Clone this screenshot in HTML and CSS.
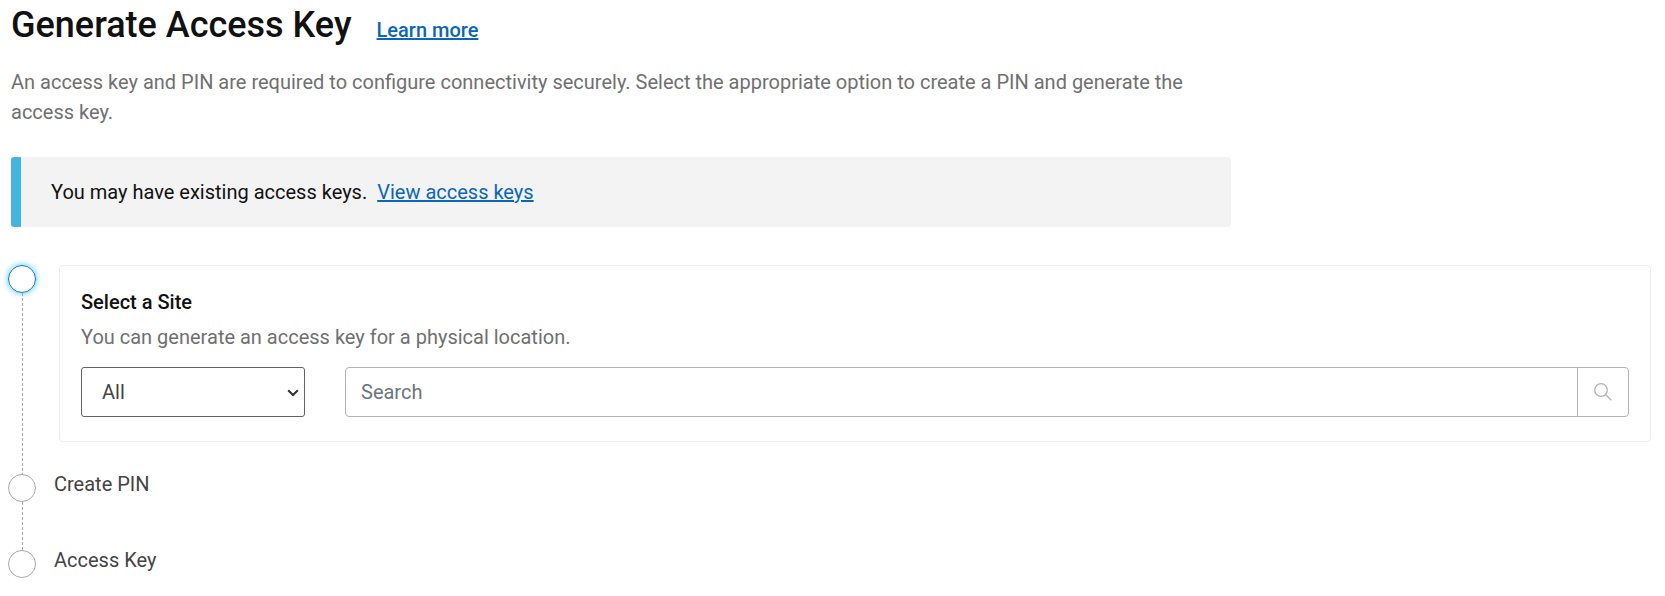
FILE: index.html
```
<!DOCTYPE html>
<html lang="en">

<head>
    <meta charset="UTF-8">
    <meta name="viewport" content="width=device-width, initial-scale=1.0">
    <title>Generate Access Key</title>
    <link rel="stylesheet" href="styles.css">
</head>

<body>
    <main class="page">
        <header class="page-header">
            <h1>Generate Access Key</h1>
            <a class="learn-more" href="#">Learn more</a>
        </header>
        <p class="description">An access key and PIN are required to configure connectivity securely. Select the
            appropriate option to create a PIN and generate the access key.</p>
        <div class="notice">
            <span>You may have existing access keys.</span>
            <a href="#">View access keys</a>
        </div>
        <ol class="steps">
            <li class="step active">
                <div class="marker"></div>
                <section class="card">
                    <h2>Select a Site</h2>
                    <p>You can generate an access key for a physical location.</p>
                    <form class="filters">
                        <div class="select-wrap">
                            <select class="site-filter" aria-label="Site filter">
                                <option>All</option>
                            </select>
                            <svg class="chevron" viewBox="0 0 12 8" aria-hidden="true">
                                <path d="M1.2 1.2 6 6l4.800-4.800" />
                            </svg>
                        </div>
                        <div class="search">
                            <input type="text" placeholder="Search" aria-label="Search sites">
                            <button type="button" aria-label="Search">
                                <svg viewBox="0 0 18 18" aria-hidden="true">
                                    <circle cx="7" cy="7" r="6.300" />
                                    <path d="M11.500 11.500 17.300 17.300" />
                                </svg>
                            </button>
                        </div>
                    </form>
                </section>
            </li>
            <li class="step">
                <div class="marker"></div>
                <span class="step-label">Create PIN</span>
            </li>
            <li class="step">
                <div class="marker"></div>
                <span class="step-label">Access Key</span>
            </li>
        </ol>
    </main>
</body>

</html>
```
FILE: styles.css
```
*,
*::before,
*::after {
    box-sizing: border-box;
}

body {
    font-family: Roboto, Arial, sans-serif;
    font-size: 20px;
    line-height: 30px;
    margin: 0;
    color: #111;
    background-color: #fff;
}

h1,
h2,
p {
    margin: 0;
}

a {
    color: #0b66b8;
}

.page {
    padding: 3px 14px 16px 11px;
}

.page-header {
    display: flex;
    align-items: baseline;
    gap: 25px;
    margin-bottom: 20px;
}

h1 {
    font-size: 36px;
    line-height: 44px;
    font-weight: 500;
}

.learn-more {
    font-weight: 500;
}

.description {
    max-width: 1200px;
    margin-bottom: 30px;
    color: #707070;
}

.notice {
    display: flex;
    gap: 10px;
    max-width: 1220px;
    margin-bottom: 38px;
    padding: 20px 30px;
    border-left: 10px solid #41b6e0;
    border-radius: 3px;
    background-color: #f3f3f3;
}

.steps {
    list-style: none;
    margin: 0 0 0 -3px;
    padding: 0;
}

.step {
    display: flex;
}

.step:not(:last-child) {
    min-height: 76px;
}

.step.active {
    gap: 23px;
}

.marker {
    display: flex;
    flex-direction: column;
    align-items: center;
    flex: 0 0 28px;
}

.marker::before {
    content: "";
    width: 28px;
    height: 28px;
    border: 1px solid #aaa;
    border-radius: 50%;
}

.active .marker::before {
    border-color: #0d76b0;
    box-shadow: 0 0 6px #41c5f5;
}

/* dashed line down to the next step */
.step:not(:last-child) .marker::after {
    content: "";
    flex: 1;
    width: 1px;
    background: repeating-linear-gradient(#aaa 0 3px, transparent 3px 5px);
}

.step-label {
    margin: -5px 0 0 18px;
    color: #444;
}

.card {
    flex: 1;
    min-width: 0;
    margin-bottom: 32px;
    padding: 21px 21px 24px;
    border: 1px solid #eee;
    border-radius: 4px;
}

.card h2 {
    margin-bottom: 5px;
    font-size: 20px;
    font-weight: 500;
}

.card p {
    margin-bottom: 15px;
    color: #707070;
}

.filters {
    display: flex;
    gap: 40px;
}

.select-wrap {
    position: relative;
    flex: 0 0 224px;
}

.site-filter {
    width: 100%;
    height: 50px;
    padding: 0 20px;
    border: 1px solid #636363;
    border-radius: 3px;
    font: inherit;
    color: #444;
    background-color: #fff;
    appearance: none;
}

.chevron {
    position: absolute;
    right: 6px;
    top: 22px;
    width: 12px;
    height: 8px;
    fill: none;
    stroke: #333;
    stroke-width: 2;
    pointer-events: none;
}

.search {
    display: flex;
    flex: 1;
    height: 50px;
    border: 1px solid #b3b3b3;
    border-radius: 4px;
}

.search input {
    flex: 1;
    min-width: 0;
    padding: 0 15px;
    border: none;
    font: inherit;
    background: none;
}

.search input::placeholder {
    color: #6c757d;
}

.search button {
    display: flex;
    align-items: center;
    justify-content: center;
    width: 51px;
    padding: 0;
    border: none;
    border-left: 1px solid #b3b3b3;
    background: none;
    cursor: pointer;
}

.search svg {
    width: 18px;
    height: 18px;
    fill: none;
    stroke: #b3b3b3;
    stroke-width: 1.300;
}
```
